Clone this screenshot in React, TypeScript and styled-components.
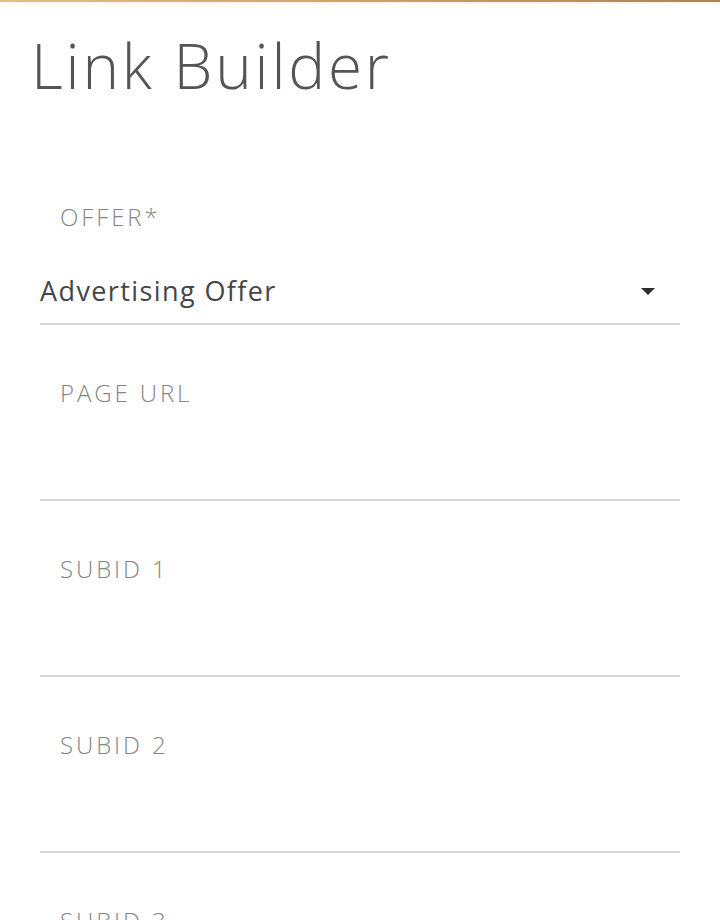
import * as React from 'react'
import styled, { createGlobalStyle } from 'styled-components'

const GlobalStyle = createGlobalStyle`
  html, body {
    margin: 0;
    padding: 0;
    background: #ffffff;
  }
  body {
    font-family: 'Open Sans', 'Liberation Sans', sans-serif;
    color: #4a4a4a;
  }
  * {
    box-sizing: border-box;
  }
`

const Page = styled.div`
  width: 720px;
  height: 920px;
  overflow: hidden;
`

// thin gold accent line on top of the card
const TopBar = styled.div`
  height: 2px;
  background: linear-gradient(90deg, #dcc08a 0%, #caa468 50%, #a9845c 100%);
  box-shadow: 0 1px 3px rgba(214, 184, 122, 0.25);
`

const Title = styled.h1`
  margin: 0;
  padding: 25px 0 0 31px;
  height: 147px;
  font-size: 62px;
  line-height: 76px;
  font-weight: 300;
  color: #555555;
  letter-spacing: 2.8px;
`

const Form = styled.div`
  padding: 0 40px;
`

const Field = styled.div`
  height: 176px;
  padding: 54px 0 12px;
  border-bottom: 2px solid #d6d6d6;
  display: flex;
  flex-direction: column;
`

const Label = styled.div`
  padding-left: 20px;
  height: 28px;
  font-size: 24px;
  line-height: 28px;
  font-weight: 300;
  color: #858585;
  letter-spacing: 2.9px;
  text-transform: uppercase;
`

const ValueRow = styled.div`
  margin-top: 40px;
  height: 40px;
  display: flex;
  align-items: center;
  justify-content: space-between;
  padding-right: 25px;
`

const Value = styled.span`
  font-size: 27px;
  line-height: 38px;
  color: #464646;
  letter-spacing: 1.4px;
`

const Caret = styled.span`
  width: 0;
  height: 0;
  border-left: 7.5px solid transparent;
  border-right: 7.5px solid transparent;
  border-top: 7px solid #2e2e2e;
`

type FieldProps = {
  label: string
  value?: string
  select?: boolean
}

const FormField = ({ label, value, select }: FieldProps) => (
  <Field>
    <Label>{label}</Label>
    <ValueRow>
      <Value>{value}</Value>
      {select && <Caret />}
    </ValueRow>
  </Field>
)

export default function App() {
  return (
    <Page>
      <GlobalStyle />
      <TopBar />
      <Title>Link Builder</Title>
      <Form>
        <FormField label="Offer*" value="Advertising Offer" select />
        <FormField label="Page URL" />
        <FormField label="SubID 1" />
        <FormField label="SubID 2" />
        <FormField label="SubID 3" />
      </Form>
    </Page>
  )
}
